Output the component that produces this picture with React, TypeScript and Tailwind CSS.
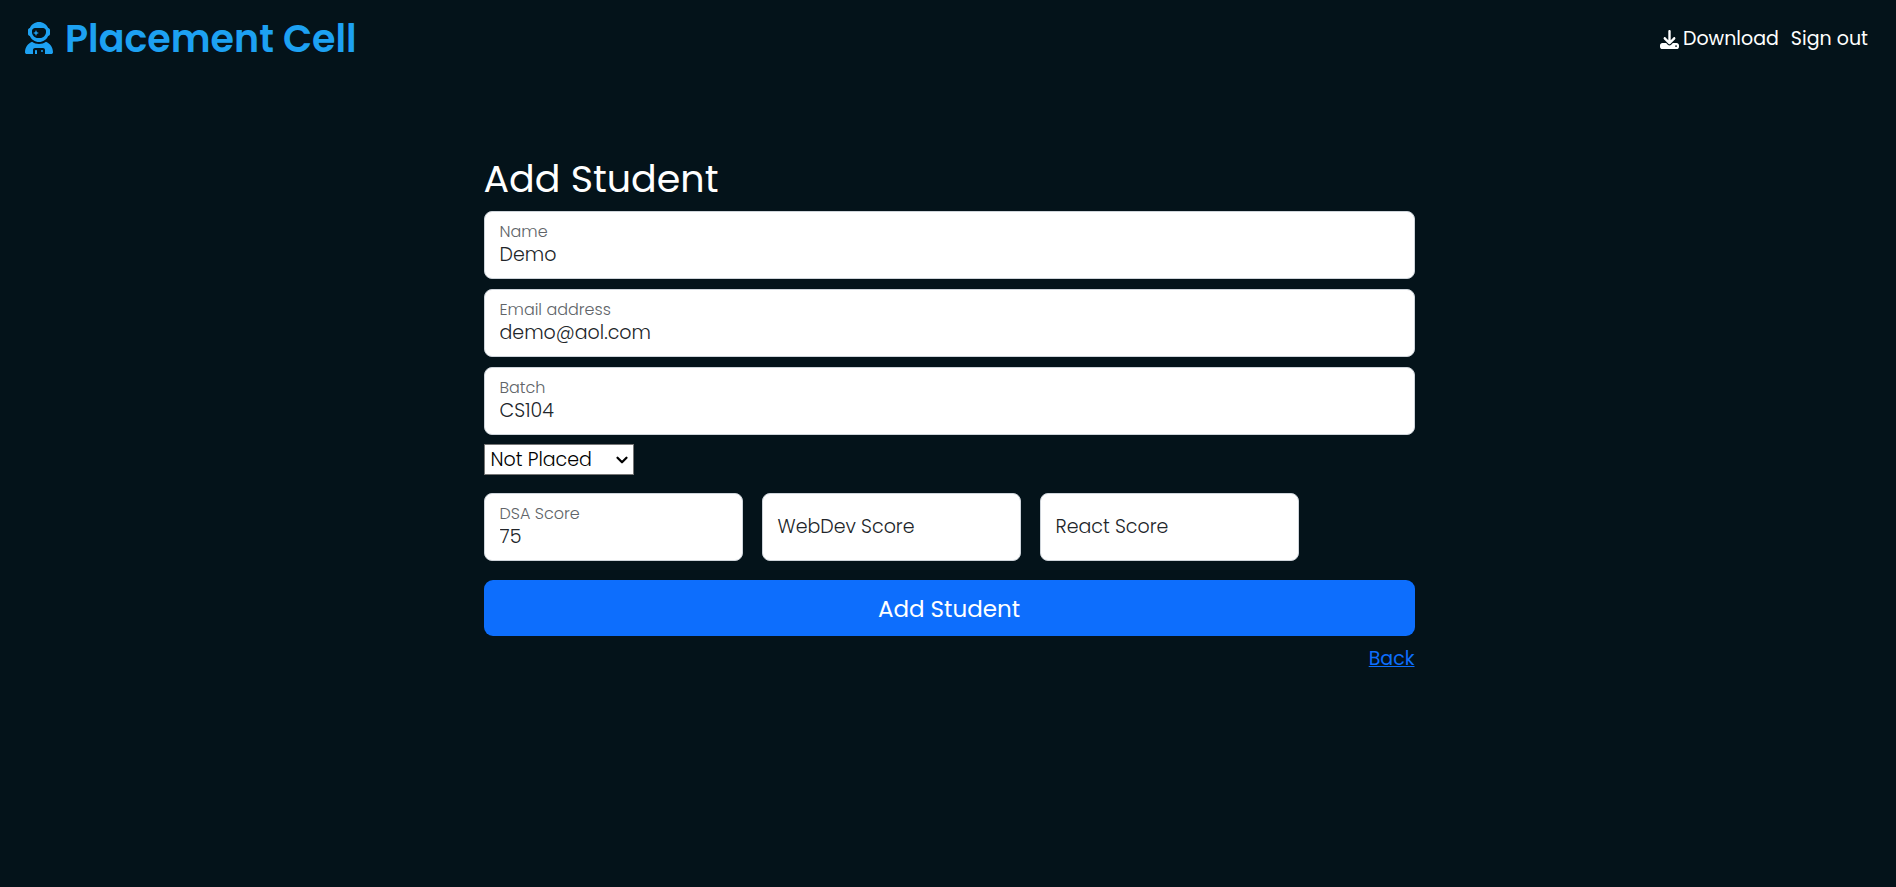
import { useState } from "react";
import type { InputHTMLAttributes } from "react";
import { ChevronDown } from "lucide-react";
import { FaDownload, FaUserAstronaut } from "react-icons/fa6";

type FieldProps = InputHTMLAttributes<HTMLInputElement> & { id: string; label: string };

function Field({ id, label, ...rest }: FieldProps) {
  return (
    <div className="relative">
      <input
        id={id}
        placeholder=" "
        className="peer block h-[68px] w-full rounded-lg border border-[#ced4da] bg-white px-[15px] pt-5 pb-0.5 text-[19px] font-light text-[#212529] outline-none"
        {...rest}
      />
      <label
        htmlFor={id}
        className="pointer-events-none absolute top-[9px] left-4 text-base leading-6 font-light text-[#606468] peer-placeholder-shown:top-5 peer-placeholder-shown:text-[19px] peer-placeholder-shown:leading-7 peer-placeholder-shown:text-[#212529]"
      >
        {label}
      </label>
    </div>
  );
}

export default function App() {
  const [status, setStatus] = useState("Not Placed");
  return (
    <div className="min-h-screen bg-[#04131a] font-['Poppins','Inter',sans-serif] text-white">
      <nav className="flex h-[76px] items-center justify-between pr-7 pl-[25px]">
        <a href="#" className="flex items-center gap-3 text-[38px] font-semibold text-[#1da1f2]">
          <FaUserAstronaut className="h-8 w-7" />
          Placement Cell
        </a>
        <div className="flex gap-3 pt-0.5 text-[19px]">
          <a href="#" className="flex items-center gap-1">
            <FaDownload className="size-[19px]" />
            Download
          </a>
          <a href="#">Sign out</a>
        </div>
      </nav>
      <main className="mx-auto w-full max-w-[933px] pt-[79px] pl-0.5">
        <h1 className="mb-2 text-[38px] leading-12">Add Student</h1>
        <form onSubmit={(e) => e.preventDefault()}>
          <div className="flex flex-col gap-2.5">
            <Field id="name" label="Name" defaultValue="Demo" />
            <Field id="email" label="Email address" type="email" defaultValue="demo@aol.com" />
            <Field id="batch" label="Batch" defaultValue="CS104" />
          </div>
          <div className="relative mt-[9px] w-[150px]">
            <select
              aria-label="Placement status"
              value={status}
              onChange={(e) => setStatus(e.target.value)}
              className="block h-[31px] w-full appearance-none border border-[#767676] bg-white pl-1.5 text-[19px] leading-7 font-light text-black"
            >
              <option>Not Placed</option>
              <option>Placed</option>
            </select>
            <ChevronDown className="pointer-events-none absolute top-[7px] right-[3px] size-[18px] text-black" strokeWidth={3} />
          </div>
          <div className="mt-[18px] mr-[116px] grid grid-cols-3 gap-[19px]">
            <Field id="dsa" label="DSA Score" defaultValue="75" />
            <Field id="webdev" label="WebDev Score" />
            <Field id="react" label="React Score" />
          </div>
          <button type="submit" className="mt-[19px] block h-14 w-full rounded-[9px] bg-[#0d6efd] pt-0.5 text-[23px]">
            Add Student
          </button>
        </form>
        <div className="mt-[9px] text-right text-[19px]">
          <a href="#" className="text-[#0d6efd] underline">
            Back
          </a>
        </div>
      </main>
    </div>
  );
}
